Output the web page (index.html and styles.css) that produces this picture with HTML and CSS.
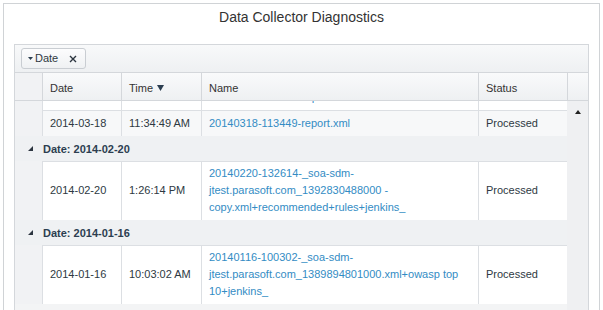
FILE: index.html
```html
<!DOCTYPE html>
<html>
<head>
<meta charset="utf-8">
<link rel="stylesheet" href="styles.css">
</head>
<body>
<div class="panel">
  <h1 class="title">Data Collector Diagnostics</h1>
  <div class="grid">
    <div class="toolbar">
      <span class="chip">
        <svg class="chip-caret" width="5" height="3" viewBox="0 0 5 3"><polygon points="0,0 5,0 2.5,3" fill="#2c3e50"/></svg>
        <span class="chip-label">Date</span>
        <svg class="chip-x" width="8" height="8" viewBox="0 0 8 8"><path d="M1 1 L7 7 M7 1 L1 7" stroke="#2c3540" stroke-width="1.4" fill="none"/></svg>
      </span>
    </div>
    <div class="head">
      <div class="hcell indent"></div>
      <div class="hcell">Date</div>
      <div class="hcell">Time <svg class="sort" width="7" height="6" viewBox="0 0 7 6"><polygon points="0,0 7,0 3.5,6" fill="#2c3e50"/></svg></div>
      <div class="hcell">Name</div>
      <div class="hcell">Status</div>
      <div class="hcell sbh"></div>
    </div>
    <div class="body">
      <div class="rows">
        <div class="row single">
          <div class="indent"></div>
          <div class="cell">2014-03-18</div>
          <div class="cell">1:22:13 PM</div>
          <div class="cell name"><a class="link">20140318-132213-report.xml</a></div>
          <div class="cell">Processed</div>
        </div>
        <div class="row single alt">
          <div class="indent"></div>
          <div class="cell">2014-03-18</div>
          <div class="cell">11:34:49 AM</div>
          <div class="cell name"><a class="link">20140318-113449-report.xml</a></div>
          <div class="cell">Processed</div>
        </div>
        <div class="group">
          <svg class="gtri" width="5" height="5" viewBox="0 0 5 5"><polygon points="0,5 5,5 5,0" fill="#2c3540"/></svg>
          <span>Date: 2014-02-20</span>
        </div>
        <div class="row">
          <div class="indent"></div>
          <div class="cell">2014-02-20</div>
          <div class="cell">1:26:14 PM</div>
          <div class="cell name"><a class="link">20140220-132614-_soa-sdm-<br>jtest.parasoft.com_1392830488000 -<br>copy.xml+recommended+rules+jenkins_</a></div>
          <div class="cell">Processed</div>
        </div>
        <div class="group">
          <svg class="gtri" width="5" height="5" viewBox="0 0 5 5"><polygon points="0,5 5,5 5,0" fill="#2c3540"/></svg>
          <span>Date: 2014-01-16</span>
        </div>
        <div class="row">
          <div class="indent"></div>
          <div class="cell">2014-01-16</div>
          <div class="cell">10:03:02 AM</div>
          <div class="cell name"><a class="link">20140116-100302-_soa-sdm-<br>jtest.parasoft.com_1389894801000.xml+owasp top<br>10+jenkins_</a></div>
          <div class="cell">Processed</div>
        </div>
      </div>
      <div class="scroll">
        <svg width="6" height="4" viewBox="0 0 6 4"><polygon points="0,4 6,4 3,0" fill="#222"/></svg>
      </div>
    </div>
  </div>
</div>
</body>
</html>
```

FILE: styles.css
```css
html, body {
  margin: 0;
  height: 100%;
  overflow: hidden;
}
body {
  font-family: "Liberation Sans", Arial, sans-serif;
  font-size: 11px;
  color: #2e3942;
  background: #fff;
}
.panel {
  margin: 3px 3px 0;
  border: 1px solid #d0d3d6;
  border-bottom: none;
  padding: 0 10px;
  height: 400px;
}
.title {
  margin: 0 0 18px;
  padding-top: 4px;
  height: 18px;
  font-size: 14px;
  font-weight: normal;
  line-height: 18px;
  text-align: center;
  color: #333;
}
.grid {
  border: 1px solid #d4d7db;
  background: #f3f4f5;
  height: 320px;
}
.toolbar {
  padding: 3px 6px;
  height: 21px;
  border-bottom: 1px solid #d4d7db;
  background: linear-gradient(#f8f9fa, #eef0f2);
}
.chip {
  box-sizing: border-box;
  display: inline-flex;
  align-items: center;
  width: 65px;
  height: 21px;
  padding: 0 0 0 6px;
  border: 1px solid #c9cdd2;
  border-radius: 3px;
  background: linear-gradient(#fcfcfd, #eff1f3);
  color: #2e3942;
}
.chip-caret {
  margin-right: 2px;
}
.chip-label {
  line-height: 17px;
}
.chip-x {
  margin-left: 11px;
}
.head {
  display: grid;
  grid-template-columns: 27px 79px 80px 277px 89px 21px;
  height: 27px;
  border-bottom: 1px solid #d4d7db;
  background: linear-gradient(#f9fafb, #eef0f2);
}
.hcell {
  box-sizing: border-box;
  display: flex;
  align-items: center;
  padding: 3px 7px 0;
  border-left: 1px solid #d4d7db;
  color: #333;
}
.hcell.indent {
  border-left: none;
}
.sort {
  margin-left: 4px;
}
.body {
  display: flex;
  height: 260px;
  overflow: hidden;
}
.rows {
  width: 552px;
  margin-top: -17px;
}
.row {
  display: grid;
  grid-template-columns: 27px 79px 80px 277px 89px;
}
.indent {
  background: #f1f2f4;
}
.cell {
  display: flex;
  align-items: center;
  padding: 3px 7px 4px;
  line-height: 17px;
  border-top: 1px solid #dcdfe3;
  border-left: 1px solid #dcdfe3;
  background: #fff;
}
.row.single .cell {
  padding: 4px 7px;
}
.row.alt .cell {
  background: #f7f8f9;
}
.link {
  color: #338cc4;
  text-decoration: none;
}
.group {
  display: flex;
  align-items: center;
  height: 25px;
  padding-left: 13px;
  background: #eff1f3;
  font-weight: bold;
  color: #2c3e50;
}
.gtri {
  margin-right: 10px;
}
.scroll {
  width: 21px;
  background: #eff0f2;
  display: flex;
  justify-content: center;
  align-items: flex-start;
  padding-top: 9px;
  box-sizing: border-box;
}
```
